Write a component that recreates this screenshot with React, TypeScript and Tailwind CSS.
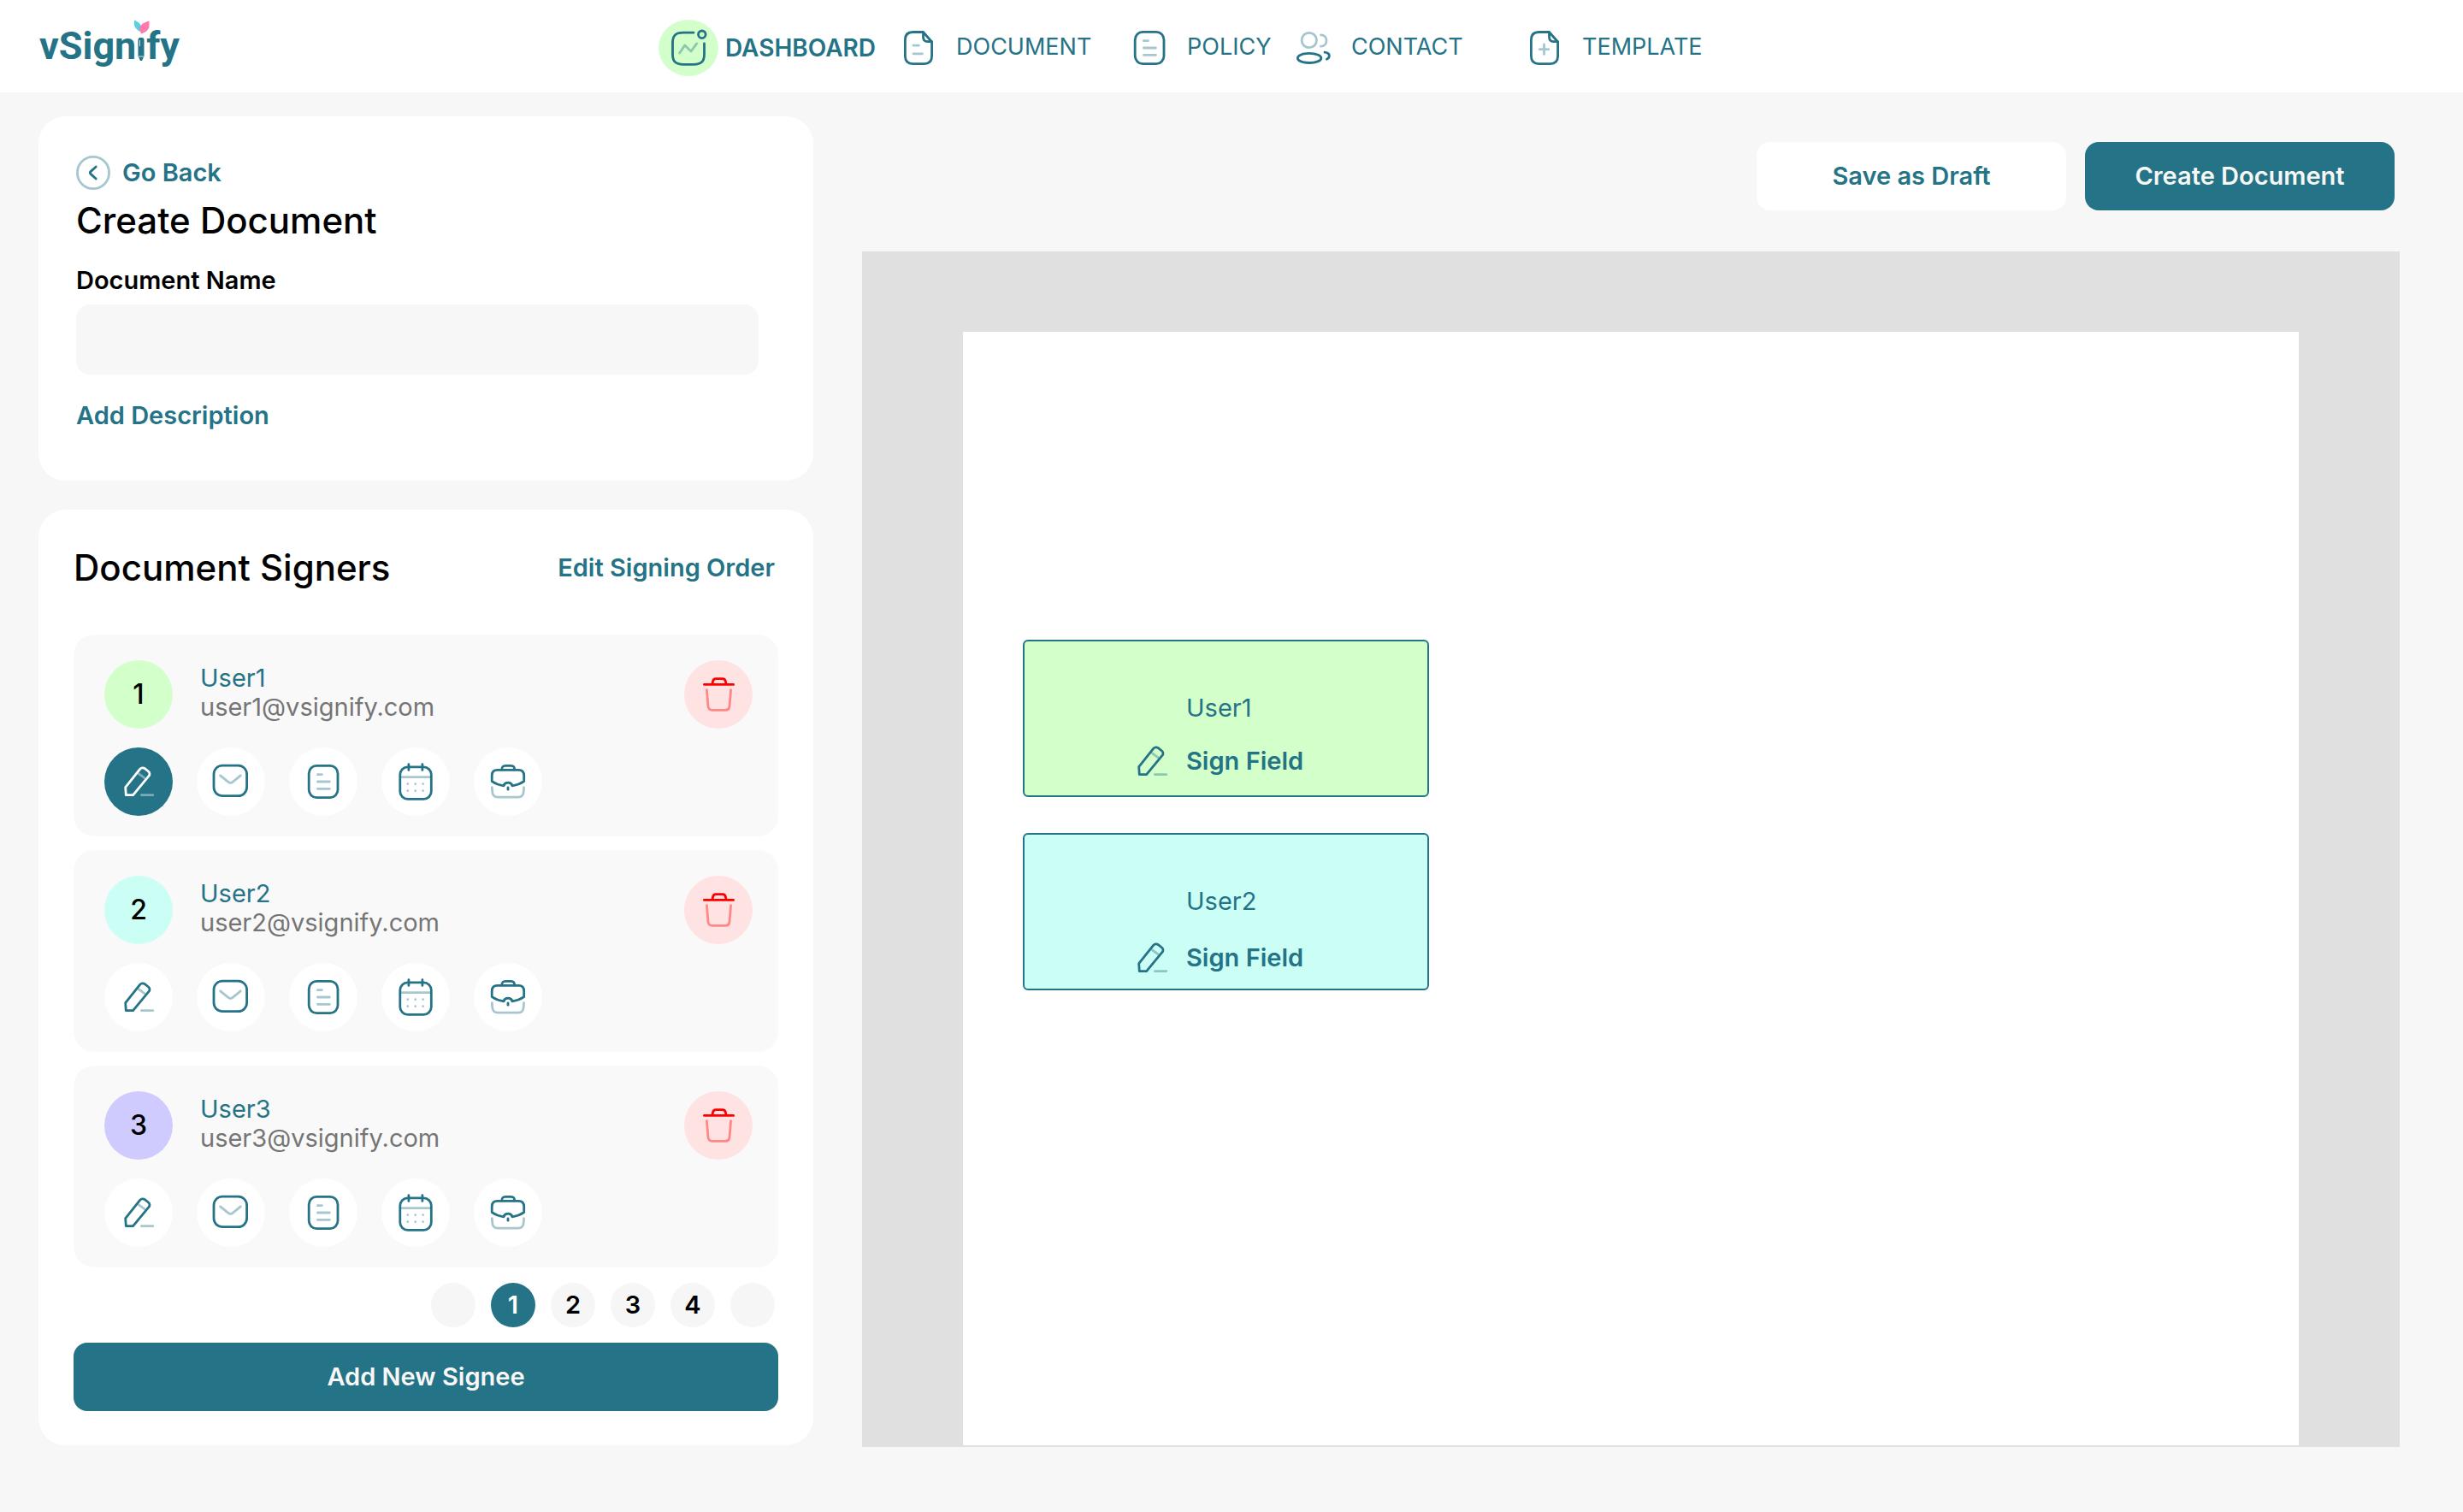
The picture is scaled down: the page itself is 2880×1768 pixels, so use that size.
import { useState } from "react";
import type { ReactNode } from "react";
import { clsx } from "clsx";

function Icon({ children }: { children: ReactNode }) {
  return (
    <svg
      viewBox="0 0 44 44"
      className="size-11 shrink-0 overflow-visible"
      fill="none"
      stroke="currentColor"
      strokeWidth="2.8"
      strokeLinecap="round"
      strokeLinejoin="round"
      aria-hidden="true"
    >
      {children}
    </svg>
  );
}

function DashboardIcon() {
  return (
    <Icon>
      <path d="M28 4.2H16C7 4.2 3.5 7.6 3.5 16V29.5C3.5 38 7 41.3 16 41.3H28C37 41.3 40.5 38 40.5 29.5V16.8" />
      <circle cx="37.8" cy="6.3" r="4.3" />
      <path d="M11.7 28L17.8 18.9L25 26L31.7 16.9" opacity="0.4" />
    </Icon>
  );
}

function FileOutline() {
  return (
    <>
      <path d="M27.5 3.5H15.4C9 3.5 6.4 6.5 6.4 12.5V31.6C6.4 37.6 9 40.6 15.4 40.6H28.6C35 40.6 37.6 37.6 37.6 31.6V15L27.5 3.5Z" />
      <path d="M27.5 4V9C27.5 13 29 14.6 32.5 14.6H37.4" />
    </>
  );
}

function DocumentIcon() {
  return (
    <Icon>
      <FileOutline />
      <path d="M16 19.1H22.4M16 28.8H26.5" opacity="0.4" />
    </Icon>
  );
}

function TemplateIcon() {
  return (
    <Icon>
      <FileOutline />
      <path d="M21.5 18V29.4M16.3 23.7H26.7" opacity="0.4" />
    </Icon>
  );
}

function PolicyIcon() {
  return (
    <Icon>
      <rect x="5.2" y="3.4" width="33.8" height="37.2" rx="9" />
      <path d="M15.4 13.7H20.4M15.4 22H29.4M15.4 30.3H29.4" opacity="0.4" />
    </Icon>
  );
}

function ContactIcon() {
  return (
    <Icon>
      <g opacity="0.4">
        <circle cx="16.8" cy="13" r="8.7" />
        <path d="M30.5 6.8C34.5 6.8 37 9.6 37 13.4C37 17.3 34.3 20.2 30.5 20.2" />
      </g>
      <ellipse cx="17.1" cy="33.9" rx="13.8" ry="5.6" />
      <path d="M35 27.2C38.3 27.6 40.3 29.2 40.3 31.2C40.3 33 39.2 34.4 37.4 35.2" />
    </Icon>
  );
}

function PenIcon() {
  return (
    <Icon>
      <path d="M7.3 37.7H15.6L34 15.4C35.5 13.6 35.2 11.4 33.5 10L29.3 6.7C27.5 5.3 25 5.6 23.6 7.4L6.7 28.6L7.3 37.7Z" />
      <path d="M22.4 12.8L28.9 17.6M25.4 37.7H38.8" opacity="0.4" />
    </Icon>
  );
}

function MailIcon() {
  return (
    <Icon>
      <rect x="2" y="3.2" width="38.6" height="35.4" rx="10" />
      <path d="M9.6 14.8L18.6 22.2C20.4 23.7 22.6 23.7 24.4 22.2L33.3 14.8" opacity="0.4" />
    </Icon>
  );
}

function CalendarIcon() {
  return (
    <Icon>
      <rect x="3.8" y="4.8" width="36.5" height="37.6" rx="9" />
      <path d="M13.9 1.7V8.4M29.9 1.7V8.4" />
      <path d="M4.5 16.7H39.5" opacity="0.4" />
      <path
        d="M12.8 24.7h.01M21.7 24.7h.01M30.6 24.7h.01M12.8 32.7h.01M21.7 32.7h.01M30.6 32.7h.01"
        opacity="0.4"
      />
    </Icon>
  );
}

function BriefcaseIcon() {
  return (
    <Icon>
      <path d="M14.8 8C14.8 4.6 16.4 3.3 19 3.3H25.5C28.2 3.3 29.7 4.6 29.7 8" />
      <path d="M3.2 21.6V15C3.2 10 5.5 8.4 9.5 8.4H34.5C38.5 8.4 40.7 10 40.7 15V21.6C36.5 24.4 32 26 27 26.8C26.4 24.4 24.5 23.2 22 23.2C19.5 23.2 17.6 24.4 17 26.8C12 26 7.4 24.4 3.2 21.6Z" />
      <path d="M22 28.8V31.2" />
      <path
        d="M3.3 28.7L3.7 34C4.1 38.5 6 40.2 10.5 40.2H33.5C38 40.2 39.9 38.5 40.2 34L40.6 28.7"
        opacity="0.4"
      />
    </Icon>
  );
}

function TrashIcon() {
  return (
    <Icon>
      <path d="M5.4 10.4H39.6M15 9.6L15.6 6.6C16.1 4.4 16.9 3.6 19 3.6H27C29.1 3.6 29.9 4.4 30.4 6.6L31 9.6" />
      <path
        d="M8.4 16.6L10 36C10.3 39 12 40.3 15 40.3H30C33 40.3 34.7 39 35 36L36.6 16.6"
        opacity="0.4"
      />
    </Icon>
  );
}

const navItems = [
  { label: "DASHBOARD", icon: <DashboardIcon />, width: "w-[282px]" },
  { label: "DOCUMENT", icon: <DocumentIcon />, width: "w-[270px]" },
  { label: "POLICY", icon: <PolicyIcon />, width: "w-[192px]" },
  { label: "CONTACT", icon: <ContactIcon />, width: "w-[270px]" },
  { label: "TEMPLATE", icon: <TemplateIcon />, width: "w-[270px]" },
];

const signers = [
  { id: 1, name: "User1", email: "user1@vsignify.com", color: "bg-[#d3ffcb]" },
  { id: 2, name: "User2", email: "user2@vsignify.com", color: "bg-[#cbfff6]" },
  { id: 3, name: "User3", email: "user3@vsignify.com", color: "bg-[#d0cbff]" },
];

const fieldTypes = [
  { label: "Signature", icon: <PenIcon /> },
  { label: "Email", icon: <MailIcon /> },
  { label: "Text", icon: <PolicyIcon /> },
  { label: "Date", icon: <CalendarIcon /> },
  { label: "Company", icon: <BriefcaseIcon /> },
];

const placedFields = [
  { name: "User1", style: "top-[360px] bg-[#d3ffcb]", gap: "gap-y-5" },
  { name: "User2", style: "top-[586px] bg-[#cbfff6]", gap: "gap-y-6" },
];

function Logo() {
  return (
    <a
      href="#"
      className="text-[45px] leading-none font-bold whitespace-nowrap [font-family:Roboto,sans-serif]"
    >
      vSign
      <span className="relative text-transparent">
        i
        <svg
          viewBox="0 0 20 50"
          className="absolute bottom-[7px] left-1/2 h-[50px] w-5 -translate-x-1/2"
          aria-hidden="true"
        >
          <path d="M2 0.5C7 2.5 10 5.5 10.5 10L8.5 14C4 11 2 8.5 2 5.5Z" fill="#5bd0e0" />
          <path d="M19.5 1.5C12 3.5 8 7 8 11L10 16.5C16.5 14.5 19.5 11 19.5 7Z" fill="#ff7bac" />
          <path d="M6.5 23.5Q6.5 21 9 21H11Q13.5 21 13.5 23.5V42.5L11 48H9L6.5 42.5Z" fill="#247386" />
          <path d="M8.5 24V31M7 43H13" stroke="#fff" strokeWidth="0.8" />
        </svg>
      </span>
      fy
    </a>
  );
}

function Header() {
  return (
    <header className="flex h-[108px] items-center bg-white pt-[3px] pl-[46px]">
      <div className="w-[724px]">
        <Logo />
      </div>
      <nav className="flex items-center">
        {navItems.map((item, i) => (
          <a
            key={item.label}
            href="#"
            className={clsx(
              "flex items-center",
              item.width,
              i === 0 ? "gap-2 text-[28px] font-semibold" : "gap-[22px] text-[27px]"
            )}
          >
            {i === 0 ? (
              <span className="flex h-[66px] w-[70px] shrink-0 items-center justify-center rounded-[50%] bg-[#d3ffcb]">
                {item.icon}
              </span>
            ) : (
              item.icon
            )}
            {item.label}
          </a>
        ))}
      </nav>
    </header>
  );
}

function DocumentDetails() {
  return (
    <section className="rounded-[32px] bg-white px-11 pt-[46px] pb-14">
      <a href="#" className="flex h-10 items-center gap-[14px] font-semibold">
        <svg viewBox="0 0 40 40" className="size-10" fill="none" stroke="currentColor" aria-hidden="true">
          <circle cx="20" cy="20" r="18.6" strokeWidth="2.8" opacity="0.4" />
          <path
            d="M23.2 13L17 18.6C16.2 19.4 16.2 20.6 17 21.4L23.2 27"
            strokeWidth="2.8"
            strokeLinecap="round"
            strokeLinejoin="round"
          />
        </svg>
        Go Back
      </a>
      <h1 className="mt-2 text-[42px] leading-14 font-medium text-black">Create Document</h1>
      <label htmlFor="document-name" className="mt-[22px] block leading-10 font-semibold text-black">
        Document Name
      </label>
      <input
        id="document-name"
        type="text"
        className="mt-2 block h-[82px] w-[798px] rounded-2xl bg-[#f7f7f7] px-6 text-black"
      />
      <button className="mt-7 block leading-10 font-semibold">Add Description</button>
    </section>
  );
}

function Signers() {
  const [page, setPage] = useState(1);

  return (
    <section className="rounded-[32px] bg-white px-[41px] py-10">
      <div className="mb-[50px] flex items-center justify-between">
        <h2 className="text-[42px] leading-14 font-medium text-black">Document Signers</h2>
        <button className="mr-1 font-semibold">Edit Signing Order</button>
      </div>

      <ul className="space-y-4">
        {signers.map((s) => (
          <li key={s.id} className="rounded-3xl bg-[#f9f9f9] pt-[30px] pr-[30px] pb-6 pl-9">
            <div className="flex items-start gap-8">
              <div
                className={clsx(
                  "flex size-20 items-center justify-center rounded-full text-[32px] font-medium text-black",
                  s.color
                )}
              >
                {s.id}
              </div>
              <div className="flex-1 pt-1 leading-[34px]">
                <div>{s.name}</div>
                <div className="text-[#757575]">{s.email}</div>
              </div>
              <button
                aria-label={`Remove ${s.name}`}
                className="flex size-20 items-center justify-center rounded-full bg-[#ffe2e2] text-[#ff0000]"
              >
                <TrashIcon />
              </button>
            </div>
            <div className="mt-[22px] flex gap-7">
              {fieldTypes.map((f, i) => (
                <button
                  key={f.label}
                  aria-label={f.label}
                  className={clsx(
                    "flex size-20 items-center justify-center rounded-full",
                    s.id === 1 && i === 0 ? "bg-[#247386] text-white" : "bg-white"
                  )}
                >
                  {f.icon}
                </button>
              ))}
            </div>
          </li>
        ))}
      </ul>

      <div className="my-[18px] mr-1 flex justify-end gap-[18px] font-semibold text-black">
        <button aria-label="Previous page" className="size-[52px] rounded-full bg-[#f6f6f6]" />
        {[1, 2, 3, 4].map((n) => (
          <button
            key={n}
            onClick={() => setPage(n)}
            className={clsx(
              "size-[52px] rounded-full",
              n === page ? "bg-[#247386] text-white" : "bg-[#f6f6f6]"
            )}
          >
            {n}
          </button>
        ))}
        <button aria-label="Next page" className="size-[52px] rounded-full bg-[#f6f6f6]" />
      </div>

      <button className="block h-20 w-full rounded-2xl bg-[#247386] font-semibold text-[#f7f7f7]">
        Add New Signee
      </button>
    </section>
  );
}

function Preview() {
  return (
    <div className="flex flex-1 flex-col pt-[30px]">
      <div className="flex justify-end gap-[22px] pr-[6px] font-semibold">
        <button className="h-20 w-[362px] rounded-2xl bg-white">Save as Draft</button>
        <button className="h-20 w-[362px] rounded-2xl bg-[#247386] text-[#f7f7f7]">
          Create Document
        </button>
      </div>
      <div className="mt-12 flex flex-1 flex-col bg-[#e0e0e0] px-[118px] pt-[94px] pb-[2px]">
        <div className="relative flex-1 bg-white">
          {placedFields.map((f) => (
            <div
              key={f.name}
              className={clsx(
                "absolute left-[70px] grid h-[184px] w-[475px] grid-cols-[44px_auto] content-start gap-x-[18px] rounded-md border-2 border-[#247386] pt-[58px] pl-[127px]",
                f.gap,
                f.style
              )}
            >
              <div className="col-start-2 leading-10">{f.name}</div>
              <PenIcon />
              <div className="leading-11 font-semibold">Sign Field</div>
            </div>
          ))}
        </div>
      </div>
    </div>
  );
}

export default function App() {
  return (
    <div className="min-h-screen bg-[#f7f7f7] text-[29px] text-[#247386] [font-family:Inter,sans-serif]">
      <Header />
      <main className="flex gap-[57px] pt-7 pr-[74px] pb-[74px] pl-[45px]">
        <div className="flex w-[906px] shrink-0 flex-col gap-[34px] pb-[2px]">
          <DocumentDetails />
          <Signers />
        </div>
        <Preview />
      </main>
    </div>
  );
}
